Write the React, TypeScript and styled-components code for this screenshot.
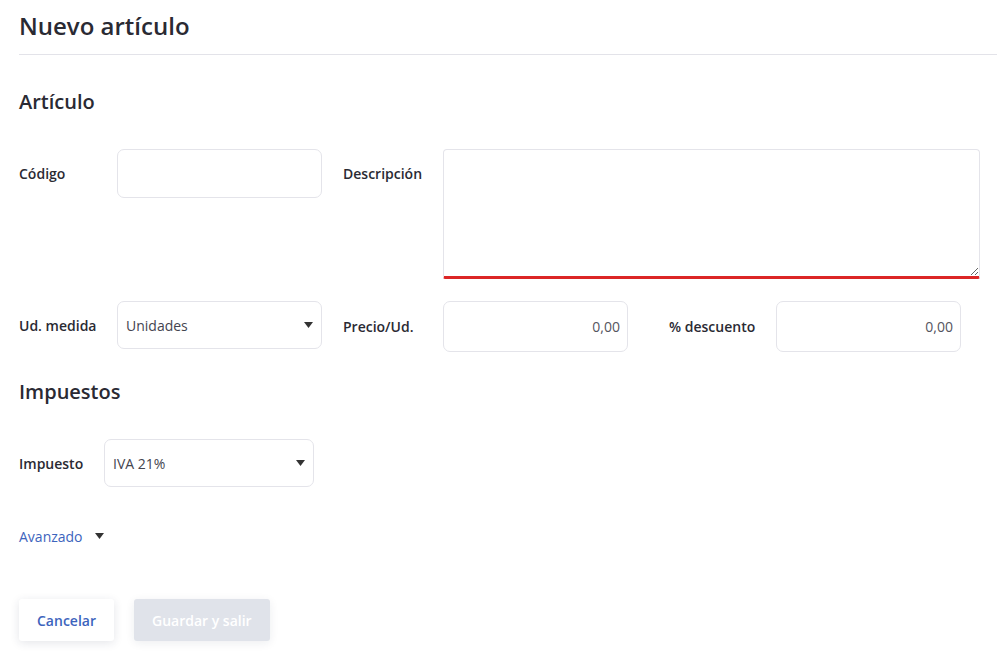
import styled, { createGlobalStyle } from 'styled-components'

const GlobalStyle = createGlobalStyle`
  html, body {
    margin: 0;
    padding: 0;
    background: #ffffff;
    font-family: "Open Sans", "Noto Sans", sans-serif;
    color: #2a2a33;
  }
  * { box-sizing: border-box; }
`

export default function App () {
  return (
    <>
      <GlobalStyle />
      <Page>
        <Header>
          <Title>Nuevo artículo</Title>
        </Header>

        <Content>
          <SectionTitle>Artículo</SectionTitle>

          <Row>
            <Field>
              <Label $width={98}>Código</Label>
              <TextInput $width={205} $height={49} />
            </Field>
            <Field $gap={21}>
              <Label $width={100}>Descripción</Label>
              <TextArea />
            </Field>
          </Row>

          <Row $top={22}>
            <Field>
              <Label $width={98} $height={48}>Ud. medida</Label>
              <SelectBox $width={205}>
                <Select defaultValue="unidades">
                  <option value="unidades">Unidades</option>
                </Select>
                <Caret />
              </SelectBox>
            </Field>
            <Field $gap={21}>
              <Label $width={100} $height={51}>Precio/Ud.</Label>
              <TextInput $width={185} $height={51} $align="right" defaultValue="0,00" />
            </Field>
            <Field $gap={41}>
              <Label $width={107} $height={51}>% descuento</Label>
              <TextInput $width={185} $height={51} $align="right" defaultValue="0,00" />
            </Field>
          </Row>

          <SectionTitle $top={26}>Impuestos</SectionTitle>

          <Row>
            <Field>
              <Label $width={85} $height={48}>Impuesto</Label>
              <SelectBox $width={210}>
                <Select defaultValue="iva21">
                  <option value="iva21">IVA 21%</option>
                </Select>
                <Caret />
              </SelectBox>
            </Field>
          </Row>

          <Advanced>
            <AdvancedLink>Avanzado</AdvancedLink>
            <Caret $inline />
          </Advanced>

          <Actions>
            <SecondaryButton>Cancelar</SecondaryButton>
            <PrimaryButton disabled>Guardar y salir</PrimaryButton>
          </Actions>
        </Content>
      </Page>
    </>
  )
}

const Caret = ({ $inline }: { $inline?: boolean }) => (
  <CaretIcon $inline={$inline} width="9" height="6" viewBox="0 0 9 6">
    <path d="M0 0 H9 L4.5 6 Z" fill="#333333" />
  </CaretIcon>
)

const Page = styled.div`
  width: 997px;
  min-height: 658px;
`

const Header = styled.div`
  margin-left: 19px;
  height: 55px;
  border-bottom: 1px solid #e3e3e9;
  padding-top: 8px;
`

const Title = styled.h1`
  margin: 0;
  font-size: 24px;
  line-height: 36px;
  font-weight: 600;
  color: #2a2a33;
`

const Content = styled.div`
  padding: 0 19px;
`

const SectionTitle = styled.h2<{ $top?: number }>`
  margin: ${p => p.$top ?? 33}px 0 0;
  height: 61px;
  font-size: 20px;
  line-height: 28px;
  font-weight: 600;
  color: #2a2a33;
`

const Row = styled.div<{ $top?: number }>`
  display: flex;
  align-items: flex-start;
  margin-top: ${p => p.$top ?? 0}px;
`

const Field = styled.div<{ $gap?: number }>`
  display: flex;
  align-items: flex-start;
  margin-left: ${p => p.$gap ?? 0}px;
`

const Label = styled.label<{ $width: number; $height?: number }>`
  width: ${p => p.$width}px;
  height: ${p => p.$height ?? 49}px;
  display: flex;
  align-items: center;
  font-size: 14px;
  font-weight: 600;
  color: #2a2a33;
  white-space: nowrap;
`

const TextInput = styled.input<{ $width: number; $height: number; $align?: string }>`
  width: ${p => p.$width}px;
  height: ${p => p.$height}px;
  border: 1px solid #e4e4ea;
  border-radius: 7px;
  padding: 0 7px;
  font-family: inherit;
  font-size: 14px;
  color: #555560;
  text-align: ${p => p.$align ?? 'left'};
  outline: none;
  background: #fff;
`

const TextArea = styled.textarea`
  width: 537px;
  height: 130px;
  border: 1px solid #e4e4ea;
  border-bottom: 3px solid #dc2626;
  border-radius: 4px 4px 2px 2px;
  font-family: inherit;
  font-size: 14px;
  outline: none;
  resize: vertical;
  display: block;
  margin: 0;
`

const SelectBox = styled.div<{ $width: number }>`
  position: relative;
  width: ${p => p.$width}px;
  height: 48px;
`

const Select = styled.select`
  appearance: none;
  width: 100%;
  height: 100%;
  border: 1px solid #e4e4ea;
  border-radius: 7px;
  padding: 0 28px 0 8px;
  font-family: inherit;
  font-size: 14px;
  color: #444450;
  background: #fff;
  outline: none;
`

const CaretIcon = styled.svg<{ $inline?: boolean }>`
  ${p => p.$inline
    ? `display: block; margin-left: 12px;`
    : `position: absolute; right: 9px; top: 21px; pointer-events: none;`}
`

const Advanced = styled.div`
  display: flex;
  align-items: center;
  margin-top: 38px;
  height: 22px;
`

const AdvancedLink = styled.a`
  font-size: 14px;
  color: #3d64bd;
  cursor: pointer;
`

const Actions = styled.div`
  display: flex;
  gap: 20px;
  margin-top: 52px;
`

const ButtonBase = styled.button`
  height: 42px;
  padding: 0 18px;
  border: none;
  border-radius: 3px;
  font-family: inherit;
  font-size: 14px;
  font-weight: 600;
`

const SecondaryButton = styled(ButtonBase)`
  background: #fff;
  color: #3d64bd;
  box-shadow: 0 2px 10px rgba(30, 40, 70, 0.12);
  cursor: pointer;
`

const PrimaryButton = styled(ButtonBase)`
  background: #e0e3ea;
  color: #ffffff;
  box-shadow: 0 2px 10px rgba(30, 40, 70, 0.08);
`
